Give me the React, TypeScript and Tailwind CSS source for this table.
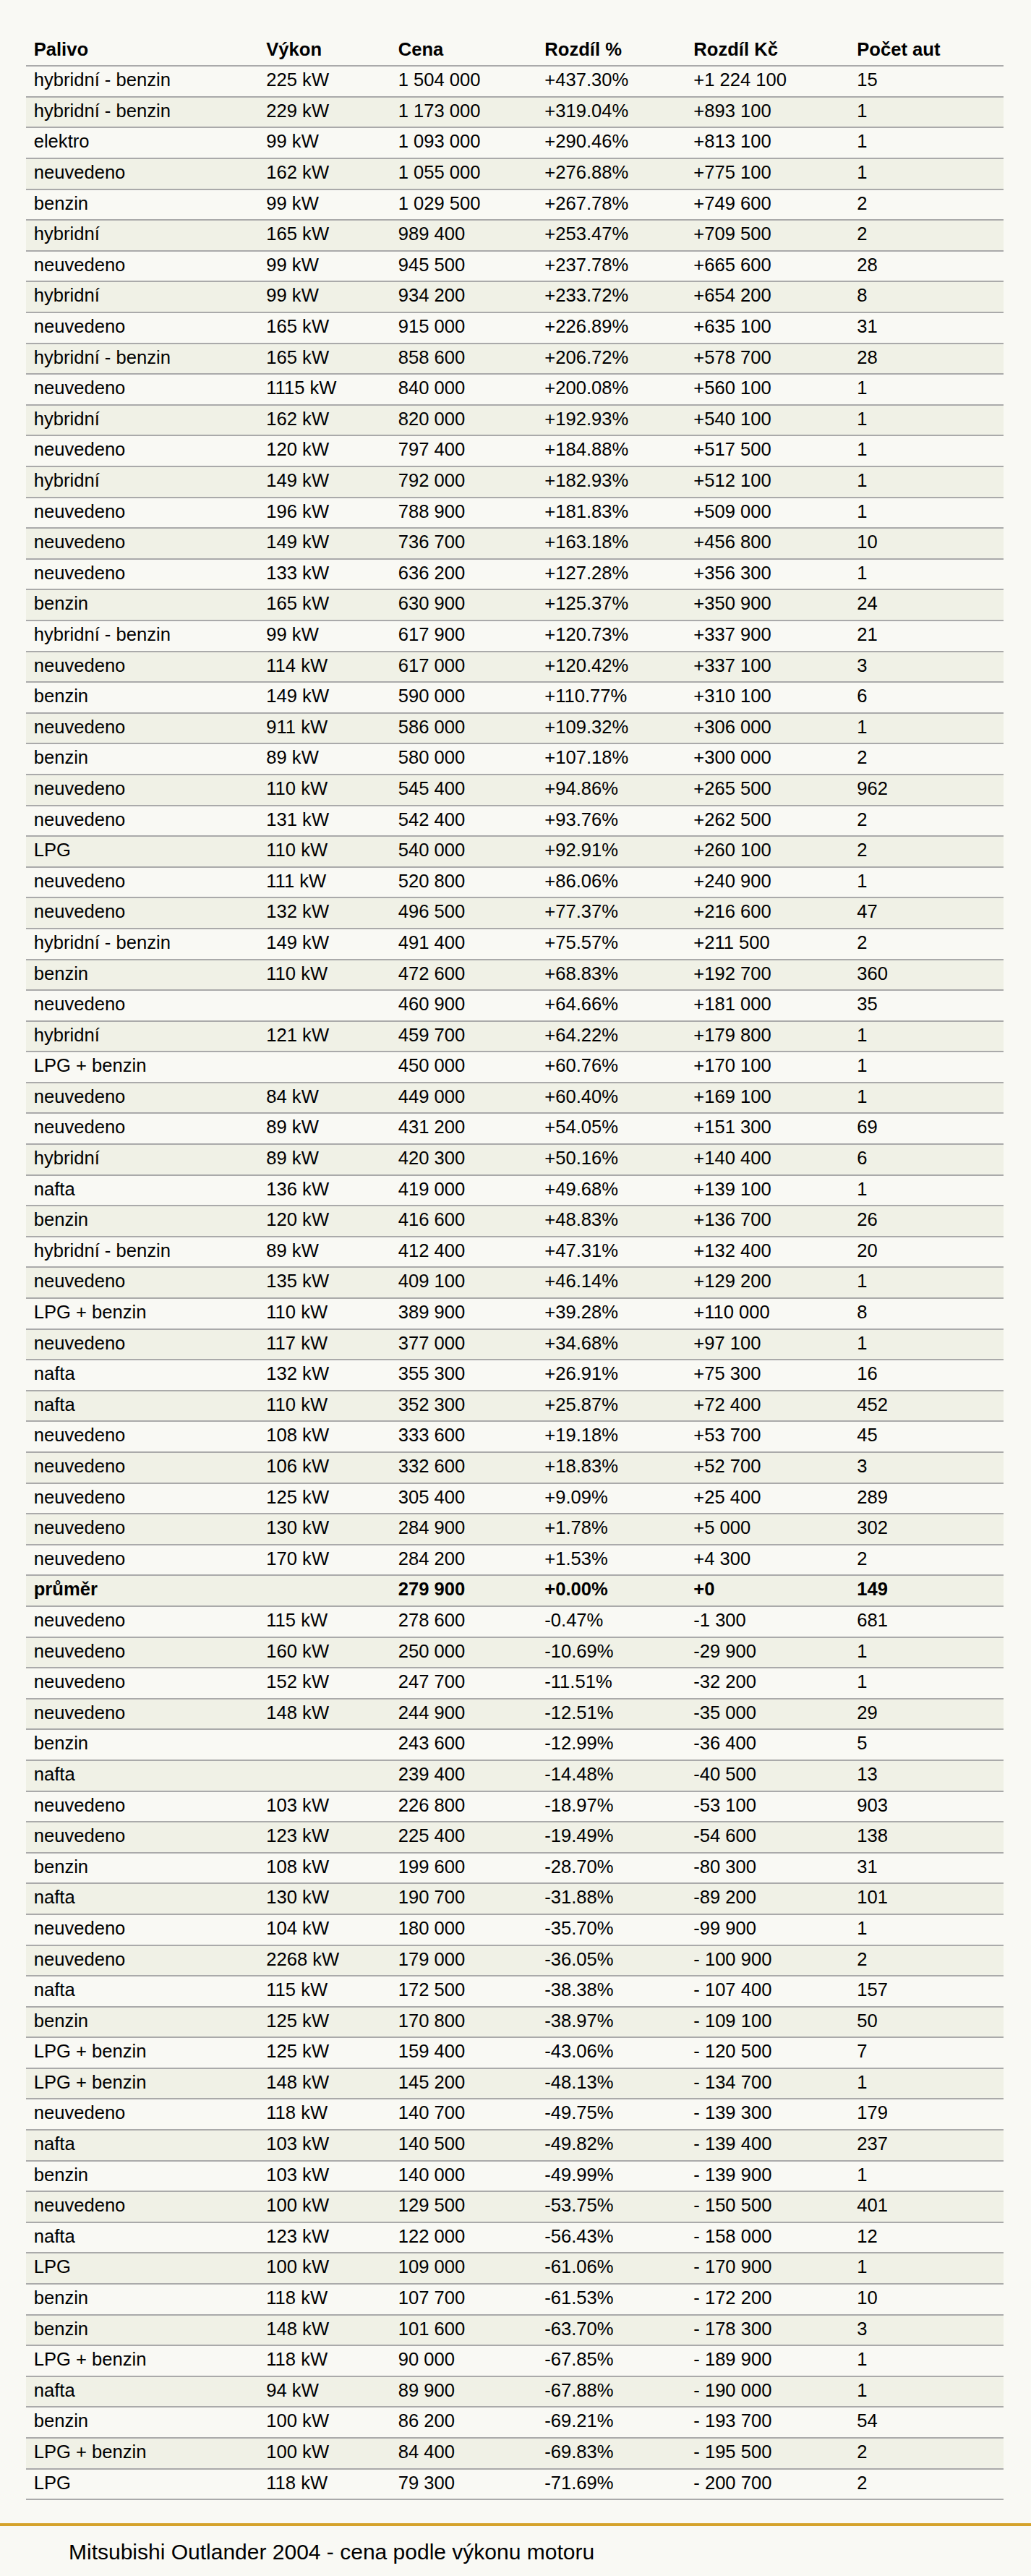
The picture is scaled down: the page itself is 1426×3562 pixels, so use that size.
type Row = [string, string, string, string, string, string];

const rows: Row[] = [
   ["hybridní - benzin", "225 kW", "1 504 000", "+437.30%", "+1 224 100", "15"],
   ["hybridní - benzin", "229 kW", "1 173 000", "+319.04%", "+893 100", "1"],
   ["elektro", "99 kW", "1 093 000", "+290.46%", "+813 100", "1"],
   ["neuvedeno", "162 kW", "1 055 000", "+276.88%", "+775 100", "1"],
   ["benzin", "99 kW", "1 029 500", "+267.78%", "+749 600", "2"],
   ["hybridní", "165 kW", "989 400", "+253.47%", "+709 500", "2"],
   ["neuvedeno", "99 kW", "945 500", "+237.78%", "+665 600", "28"],
   ["hybridní", "99 kW", "934 200", "+233.72%", "+654 200", "8"],
   ["neuvedeno", "165 kW", "915 000", "+226.89%", "+635 100", "31"],
   ["hybridní - benzin", "165 kW", "858 600", "+206.72%", "+578 700", "28"],
   ["neuvedeno", "1115 kW", "840 000", "+200.08%", "+560 100", "1"],
   ["hybridní", "162 kW", "820 000", "+192.93%", "+540 100", "1"],
   ["neuvedeno", "120 kW", "797 400", "+184.88%", "+517 500", "1"],
   ["hybridní", "149 kW", "792 000", "+182.93%", "+512 100", "1"],
   ["neuvedeno", "196 kW", "788 900", "+181.83%", "+509 000", "1"],
   ["neuvedeno", "149 kW", "736 700", "+163.18%", "+456 800", "10"],
   ["neuvedeno", "133 kW", "636 200", "+127.28%", "+356 300", "1"],
   ["benzin", "165 kW", "630 900", "+125.37%", "+350 900", "24"],
   ["hybridní - benzin", "99 kW", "617 900", "+120.73%", "+337 900", "21"],
   ["neuvedeno", "114 kW", "617 000", "+120.42%", "+337 100", "3"],
   ["benzin", "149 kW", "590 000", "+110.77%", "+310 100", "6"],
   ["neuvedeno", "911 kW", "586 000", "+109.32%", "+306 000", "1"],
   ["benzin", "89 kW", "580 000", "+107.18%", "+300 000", "2"],
   ["neuvedeno", "110 kW", "545 400", "+94.86%", "+265 500", "962"],
   ["neuvedeno", "131 kW", "542 400", "+93.76%", "+262 500", "2"],
   ["LPG", "110 kW", "540 000", "+92.91%", "+260 100", "2"],
   ["neuvedeno", "111 kW", "520 800", "+86.06%", "+240 900", "1"],
   ["neuvedeno", "132 kW", "496 500", "+77.37%", "+216 600", "47"],
   ["hybridní - benzin", "149 kW", "491 400", "+75.57%", "+211 500", "2"],
   ["benzin", "110 kW", "472 600", "+68.83%", "+192 700", "360"],
   ["neuvedeno", "", "460 900", "+64.66%", "+181 000", "35"],
   ["hybridní", "121 kW", "459 700", "+64.22%", "+179 800", "1"],
   ["LPG + benzin", "", "450 000", "+60.76%", "+170 100", "1"],
   ["neuvedeno", "84 kW", "449 000", "+60.40%", "+169 100", "1"],
   ["neuvedeno", "89 kW", "431 200", "+54.05%", "+151 300", "69"],
   ["hybridní", "89 kW", "420 300", "+50.16%", "+140 400", "6"],
   ["nafta", "136 kW", "419 000", "+49.68%", "+139 100", "1"],
   ["benzin", "120 kW", "416 600", "+48.83%", "+136 700", "26"],
   ["hybridní - benzin", "89 kW", "412 400", "+47.31%", "+132 400", "20"],
   ["neuvedeno", "135 kW", "409 100", "+46.14%", "+129 200", "1"],
   ["LPG + benzin", "110 kW", "389 900", "+39.28%", "+110 000", "8"],
   ["neuvedeno", "117 kW", "377 000", "+34.68%", "+97 100", "1"],
   ["nafta", "132 kW", "355 300", "+26.91%", "+75 300", "16"],
   ["nafta", "110 kW", "352 300", "+25.87%", "+72 400", "452"],
   ["neuvedeno", "108 kW", "333 600", "+19.18%", "+53 700", "45"],
   ["neuvedeno", "106 kW", "332 600", "+18.83%", "+52 700", "3"],
   ["neuvedeno", "125 kW", "305 400", "+9.09%", "+25 400", "289"],
   ["neuvedeno", "130 kW", "284 900", "+1.78%", "+5 000", "302"],
   ["neuvedeno", "170 kW", "284 200", "+1.53%", "+4 300", "2"],
   ["průměr", "", "279 900", "+0.00%", "+0", "149"],
   ["neuvedeno", "115 kW", "278 600", "-0.47%", "-1 300", "681"],
   ["neuvedeno", "160 kW", "250 000", "-10.69%", "-29 900", "1"],
   ["neuvedeno", "152 kW", "247 700", "-11.51%", "-32 200", "1"],
   ["neuvedeno", "148 kW", "244 900", "-12.51%", "-35 000", "29"],
   ["benzin", "", "243 600", "-12.99%", "-36 400", "5"],
   ["nafta", "", "239 400", "-14.48%", "-40 500", "13"],
   ["neuvedeno", "103 kW", "226 800", "-18.97%", "-53 100", "903"],
   ["neuvedeno", "123 kW", "225 400", "-19.49%", "-54 600", "138"],
   ["benzin", "108 kW", "199 600", "-28.70%", "-80 300", "31"],
   ["nafta", "130 kW", "190 700", "-31.88%", "-89 200", "101"],
   ["neuvedeno", "104 kW", "180 000", "-35.70%", "-99 900", "1"],
   ["neuvedeno", "2268 kW", "179 000", "-36.05%", "- 100 900", "2"],
   ["nafta", "115 kW", "172 500", "-38.38%", "- 107 400", "157"],
   ["benzin", "125 kW", "170 800", "-38.97%", "- 109 100", "50"],
   ["LPG + benzin", "125 kW", "159 400", "-43.06%", "- 120 500", "7"],
   ["LPG + benzin", "148 kW", "145 200", "-48.13%", "- 134 700", "1"],
   ["neuvedeno", "118 kW", "140 700", "-49.75%", "- 139 300", "179"],
   ["nafta", "103 kW", "140 500", "-49.82%", "- 139 400", "237"],
   ["benzin", "103 kW", "140 000", "-49.99%", "- 139 900", "1"],
   ["neuvedeno", "100 kW", "129 500", "-53.75%", "- 150 500", "401"],
   ["nafta", "123 kW", "122 000", "-56.43%", "- 158 000", "12"],
   ["LPG", "100 kW", "109 000", "-61.06%", "- 170 900", "1"],
   ["benzin", "118 kW", "107 700", "-61.53%", "- 172 200", "10"],
   ["benzin", "148 kW", "101 600", "-63.70%", "- 178 300", "3"],
   ["LPG + benzin", "118 kW", "90 000", "-67.85%", "- 189 900", "1"],
   ["nafta", "94 kW", "89 900", "-67.88%", "- 190 000", "1"],
   ["benzin", "100 kW", "86 200", "-69.21%", "- 193 700", "54"],
   ["LPG + benzin", "100 kW", "84 400", "-69.83%", "- 195 500", "2"],
   ["LPG", "118 kW", "79 300", "-71.69%", "- 200 700", "2"],
];

const head = ["Palivo", "Výkon", "Cena", "Rozdíl %", "Rozdíl Kč", "Počet aut"];

const cols =
   "grid grid-cols-[321.6px_182.4px_202.6px_206px_226px_1fr] pl-[10.7px] whitespace-nowrap leading-[29.4px] border-b-2 border-[#aaaaaa]";

export default function App() {
   return (
      <div
         className="min-h-screen bg-[#f9f9f4] text-black text-[25.6px]"
         style={{ fontFamily: '"Liberation Sans", Arial, sans-serif' }}
      >
         <div className="pt-[50px] ml-[36px] w-[1352px]">
            <div className={`${cols} font-bold pt-[4px] pb-[6.9px]`}>
               {head.map((h) => (
                  <div key={h}>{h}</div>
               ))}
            </div>
            {rows.map((r, i) => {
               const avg = r[0] === "průměr";
               return (
                  <div
                     key={i}
                     className={`${cols} pt-[4px] pb-[7.2px] ${i % 2 === 1 ? "bg-[#f0f1e6]" : ""} ${avg ? "font-bold" : ""}`}
                  >
                     {r.map((c, j) => (
                        <div key={j}>{c}</div>
                     ))}
                  </div>
               );
            })}
         </div>
         <div className="mt-[32px] border-t-4 border-[#d5a22a] pt-[18.5px] pb-[16px] pl-[95px] text-[30px] leading-[34.5px]">
            Mitsubishi Outlander 2004 - cena podle výkonu motoru
         </div>
      </div>
   );
}
